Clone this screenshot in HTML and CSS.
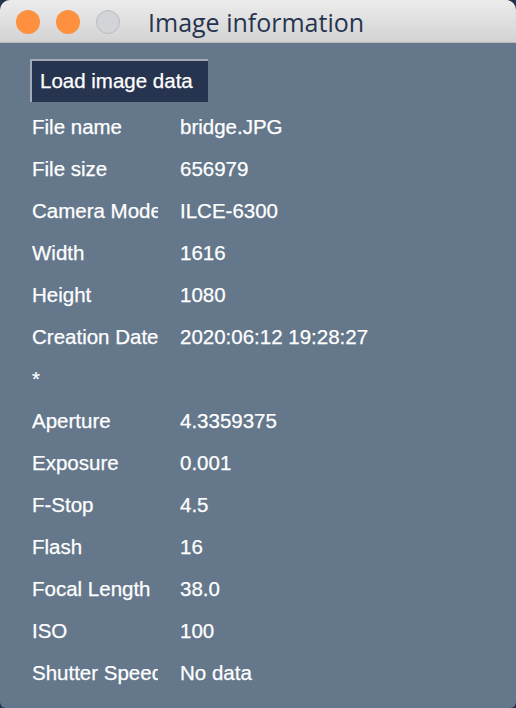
FILE: index.html
```html
<!DOCTYPE html>
<html>
<head>
<meta charset="utf-8">
<link rel="stylesheet" href="styles.css">
</head>
<body>
<div class="window">
  <div class="titlebar">
    <div class="lights">
      <span class="light on"></span>
      <span class="light on"></span>
      <span class="light off"></span>
    </div>
    <div class="title">Image information</div>
  </div>
  <div class="content">
    <button class="load">Load image data</button>
    <div class="info">
      <div class="label">File name</div><div class="value">bridge.JPG</div>
      <div class="label">File size</div><div class="value">656979</div>
      <div class="label">Camera Model</div><div class="value">ILCE-6300</div>
      <div class="label">Width</div><div class="value">1616</div>
      <div class="label">Height</div><div class="value">1080</div>
      <div class="label">Creation Date</div><div class="value">2020:06:12 19:28:27</div>
      <div class="label">*</div><div class="value"></div>
      <div class="label">Aperture</div><div class="value">4.3359375</div>
      <div class="label">Exposure</div><div class="value">0.001</div>
      <div class="label">F-Stop</div><div class="value">4.5</div>
      <div class="label">Flash</div><div class="value">16</div>
      <div class="label">Focal Length</div><div class="value">38.0</div>
      <div class="label">ISO</div><div class="value">100</div>
      <div class="label">Shutter Speed</div><div class="value">No data</div>
    </div>
  </div>
</div>
</body>
</html>
```

FILE: styles.css
```css
html, body {
  margin: 0;
  padding: 0;
  width: 516px;
  height: 708px;
  background: #26334f;
  overflow: hidden;
}

.window {
  width: 516px;
  height: 708px;
  border-radius: 10px 10px 6px 6px;
  overflow: hidden;
  background: #64778b;
  display: flex;
  flex-direction: column;
}

.titlebar {
  height: 43px;
  flex: 0 0 43px;
  background: linear-gradient(#ececec, #d3d3d3);
  border-bottom: 1px solid #b9b9b9;
  display: flex;
  align-items: center;
  box-sizing: border-box;
}

.lights {
  display: flex;
  gap: 16px;
  padding-left: 16px;
  padding-top: 2px;
}

.light {
  width: 24px;
  height: 24px;
  border-radius: 50%;
  box-sizing: border-box;
}

.light.on {
  background: #fe9040;
}

.light.off {
  background: #d2d4d8;
  border: 1px solid #b7bcc5;
}

.title {
  margin-left: 28px;
  font-family: "Open Sans", "DejaVu Sans", sans-serif;
  font-size: 25px;
  color: #27344f;
  line-height: 1;
  margin-top: 3px;
}

.content {
  padding: 16px 0 0 30px;
  display: flex;
  flex-direction: column;
  align-items: flex-start;
}

.load {
  width: 178px;
  height: 43px;
  background: #27344f;
  border: none;
  border-top: 2px solid #a2abb7;
  border-left: 2px solid #a2abb7;
  color: #ffffff;
  font-family: "Liberation Sans", Arial, sans-serif;
  font-size: 20.5px;
  -webkit-text-stroke: 0.25px #ffffff;
  text-align: left;
  padding: 0 0 2px 8px;
  margin: 0;
  box-sizing: border-box;
}

.info {
  margin-top: 4px;
  margin-left: 2px;
  display: grid;
  grid-template-columns: 126px 300px;
  column-gap: 22px;
  font-family: "Liberation Sans", Arial, sans-serif;
  font-size: 20.5px;
  -webkit-text-stroke: 0.25px #ffffff;
  color: #ffffff;
}

.label, .value {
  height: 42px;
  line-height: 42px;
  white-space: nowrap;
  overflow: hidden;
}
```
